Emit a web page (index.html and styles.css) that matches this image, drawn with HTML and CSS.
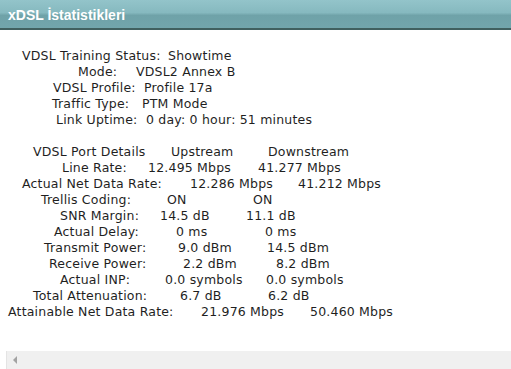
FILE: index.html
```html
<!DOCTYPE html>
<html>
<head>
<meta charset="utf-8">
<link rel="stylesheet" href="styles.css">
</head>
<body>
<div class="header"><span class="title">xDSL İstatistikleri</span></div>
<div class="content">
  <div class="block b1">
    <div class="row r1"><span class="lab">VDSL Training Status:</span><span>Showtime</span></div>
    <div class="row r2"><span class="lab">Mode:</span><span>VDSL2 Annex B</span></div>
    <div class="row r3"><span class="lab">VDSL Profile:</span><span>Profile 17a</span></div>
    <div class="row r4"><span class="lab">Traffic Type:</span><span>PTM Mode</span></div>
    <div class="row r5"><span class="lab">Link Uptime:</span><span>0 day: 0 hour: 51 minutes</span></div>
  </div>
  <div class="block b2">
    <div class="row p1"><span class="lab">VDSL Port Details</span><span class="up">Upstream</span><span>Downstream</span></div>
    <div class="row p2"><span class="lab">Line Rate:</span><span class="up">12.495 Mbps</span><span>41.277 Mbps</span></div>
    <div class="row p3"><span class="lab">Actual Net Data Rate:</span><span class="up">12.286 Mbps</span><span>41.212 Mbps</span></div>
    <div class="row p4"><span class="lab">Trellis Coding:</span><span class="up">ON</span><span>ON</span></div>
    <div class="row p5"><span class="lab">SNR Margin:</span><span class="up">14.5 dB</span><span>11.1 dB</span></div>
    <div class="row p6"><span class="lab">Actual Delay:</span><span class="up">0 ms</span><span>0 ms</span></div>
    <div class="row p7"><span class="lab">Transmit Power:</span><span class="up">9.0 dBm</span><span>14.5 dBm</span></div>
    <div class="row p8"><span class="lab">Receive Power:</span><span class="up">2.2 dBm</span><span>8.2 dBm</span></div>
    <div class="row p9"><span class="lab">Actual INP:</span><span class="up">0.0 symbols</span><span>0.0 symbols</span></div>
    <div class="row p10"><span class="lab">Total Attenuation:</span><span class="up">6.7 dB</span><span>6.2 dB</span></div>
    <div class="row p11"><span class="lab">Attainable Net Data Rate:</span><span class="up">21.976 Mbps</span><span>50.460 Mbps</span></div>
  </div>
</div>
<div class="hscroll"><span class="arrow"></span></div>
</body>
</html>
```
FILE: styles.css
```css
html, body {
  margin: 0;
  padding: 0;
  background: #ffffff;
  width: 511px;
  height: 369px;
  overflow: hidden;
}
body {
  font-family: "DejaVu Sans", "Liberation Sans", sans-serif;
  font-size: 12.5px;
  letter-spacing: 0.2px;
  color: #1f1f1f;
  display: flex;
  flex-direction: column;
}
.header {
  height: 28px;
  border-bottom: 2px solid #40605f;
  background: linear-gradient(to bottom, #93c4ca 0%, #86b9bf 45%, #6fa2a8 55%, #72a6ac 100%);
  display: flex;
  align-items: center;
  padding-left: 8px;
  flex-shrink: 0;
}
.title {
  color: #ffffff;
  font-family: "Liberation Sans", "DejaVu Sans", sans-serif;
  font-weight: bold;
  font-size: 14px;
  letter-spacing: 0;
  margin-top: 1px;
}
.content {
  flex: 1;
  padding-top: 18px;
}
.block {
  display: flex;
  flex-direction: column;
}
.b2 {
  margin-top: 16px;
}
.row {
  display: flex;
  line-height: 16px;
  height: 16px;
  white-space: nowrap;
}
.lab, .up {
  flex-shrink: 0;
}
/* block 1 : label start / value start */
.r1 { padding-left: 22px; } .r1 .lab { width: 146px; }
.r2 { padding-left: 78px; } .r2 .lab { width: 58px; }
.r3 { padding-left: 53px; } .r3 .lab { width: 91px; }
.r4 { padding-left: 52px; } .r4 .lab { width: 90px; }
.r5 { padding-left: 56px; } .r5 .lab { width: 90px; }
/* block 2 : label start / upstream start / downstream start */
.p1 { padding-left: 33px; } .p1 .lab { width: 138px; } .p1 .up { width: 97px; }
.p2 { padding-left: 62px; } .p2 .lab { width: 86px; }  .p2 .up { width: 110px; }
.p3 { padding-left: 22px; } .p3 .lab { width: 168px; } .p3 .up { width: 108px; }
.p4 { padding-left: 41px; } .p4 .lab { width: 126px; } .p4 .up { width: 86px; }
.p5 { padding-left: 60px; } .p5 .lab { width: 100px; } .p5 .up { width: 86px; }
.p6 { padding-left: 54px; } .p6 .lab { width: 122px; } .p6 .up { width: 89px; }
.p7 { padding-left: 44px; } .p7 .lab { width: 134px; } .p7 .up { width: 89px; }
.p8 { padding-left: 49px; } .p8 .lab { width: 134px; } .p8 .up { width: 93px; }
.p9 { padding-left: 60px; } .p9 .lab { width: 105px; } .p9 .up { width: 101px; }
.p10 { padding-left: 33px; } .p10 .lab { width: 147px; } .p10 .up { width: 88px; }
.p11 { padding-left: 8px; } .p11 .lab { width: 193px; } .p11 .up { width: 109px; }

.hscroll {
  height: 18px;
  margin-left: 6px;
  background: #f0f0f0;
  border-left: 1px solid #e4e4e4;
  display: flex;
  align-items: center;
  padding-left: 6px;
  flex-shrink: 0;
}
.arrow {
  width: 0;
  height: 0;
  border-top: 4px solid transparent;
  border-bottom: 4px solid transparent;
  border-right: 4px solid #a3a3a3;
}
```
